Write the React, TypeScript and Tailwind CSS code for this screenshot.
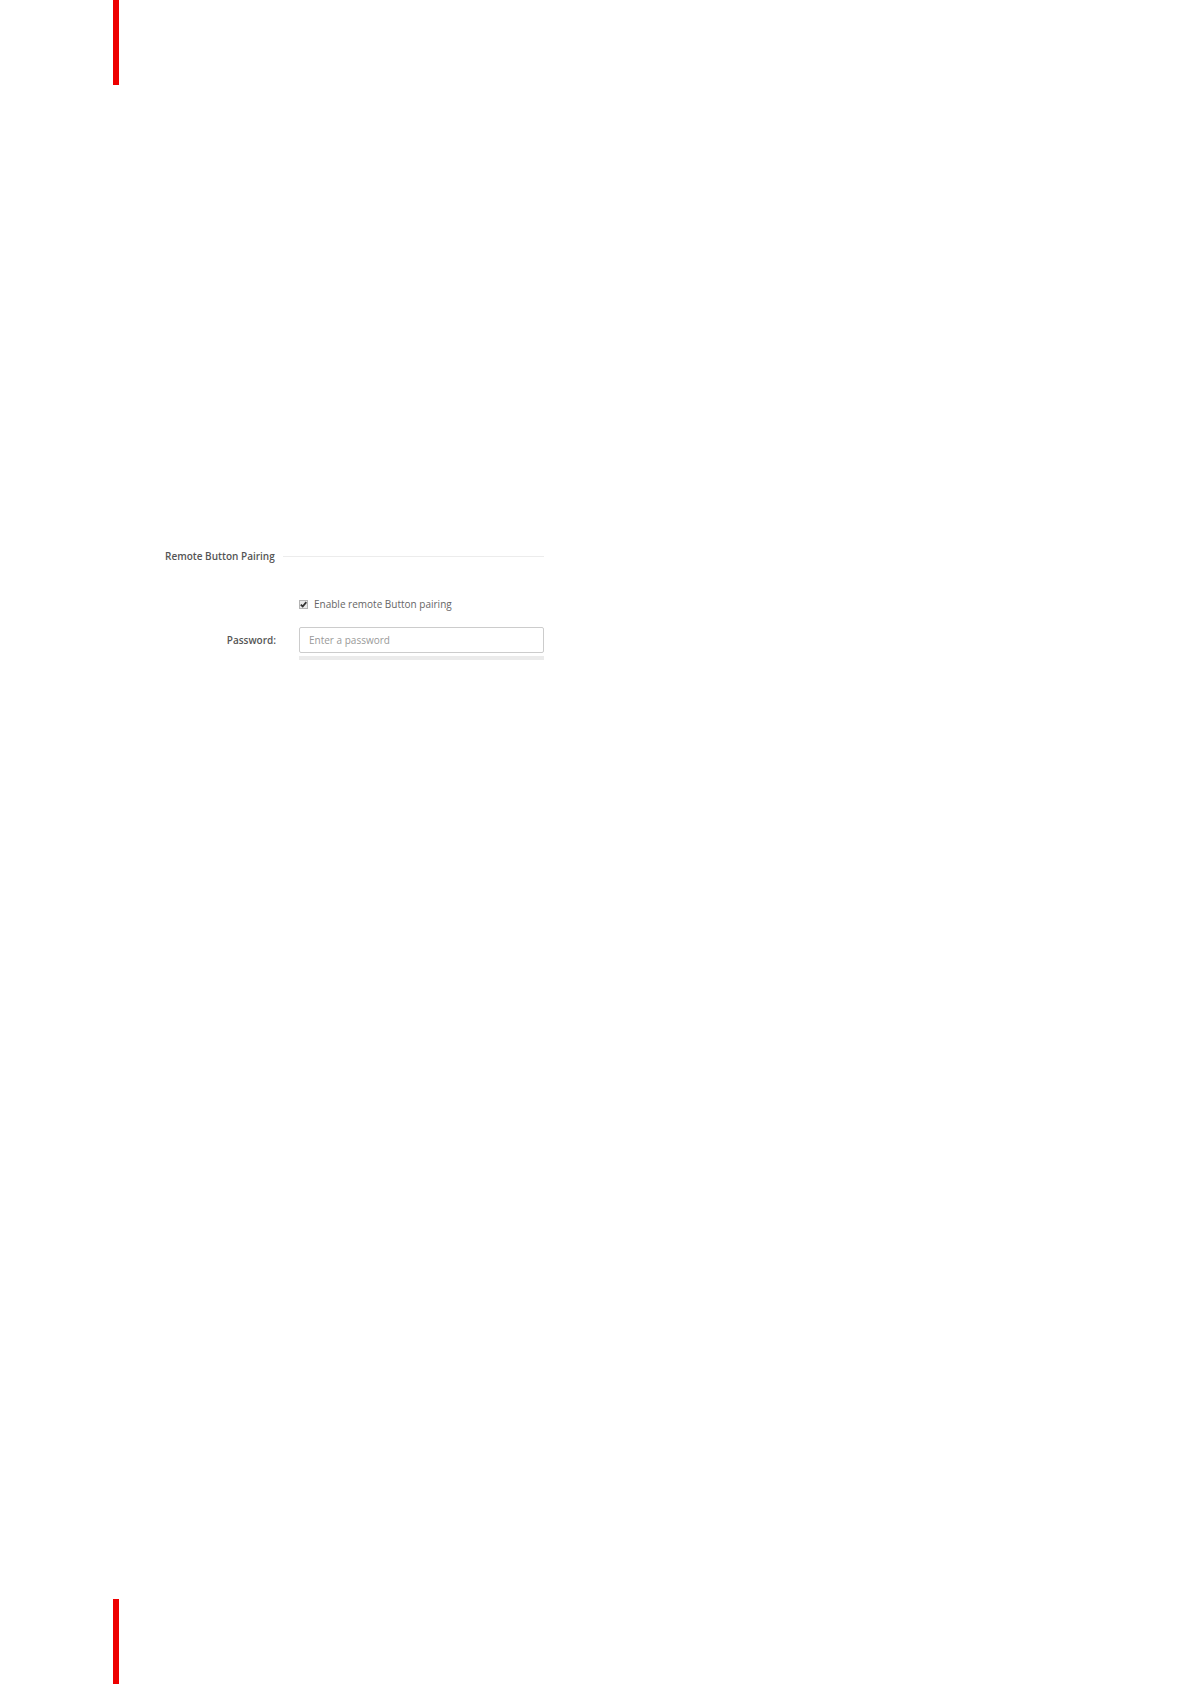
import React, { useState } from 'react';

const MarginBar: React.FC = () => <div className="ml-[113px] h-[85px] w-1.5 bg-[#ee0000]" />;

export default function App() {
  const [enabled, setEnabled] = useState(true);
  const [password, setPassword] = useState('');

  return (
    <div className="flex min-h-screen flex-col bg-white font-['Open_Sans','Liberation_Sans',sans-serif] text-[10px] leading-4 text-[#666]">
      <MarginBar />

      <main className="flex-1 px-[165px] pt-[463px]">
        <section className="w-full max-w-[379px]">
          {/* Section title */}
          <div className="flex items-center gap-2">
            <h2 className="font-semibold text-[#555]">Remote Button Pairing</h2>
            <div className="h-px flex-1 bg-[#ececec]" />
          </div>

          <form className="mt-8 grid grid-cols-[111px_1fr] items-center gap-x-[23px] gap-y-[15px]" onSubmit={e => e.preventDefault()}>
            <div className="col-start-2 flex items-center gap-1.5">
              <span className="relative flex h-[9px] w-[9px]">
                <input
                  id="enable-pairing"
                  type="checkbox"
                  checked={enabled}
                  onChange={e => setEnabled(e.target.checked)}
                  className="h-[9px] w-[9px] appearance-none border border-[#b4b4b4] bg-[#e9e9e9]"
                />
                {enabled && (
                  <svg viewBox="0 0 9 9" className="pointer-events-none absolute inset-0 h-full w-full" fill="none" stroke="#333" strokeWidth="1.8">
                    <path d="M1.8 4.6 L3.7 6.5 L7.3 2.1" />
                  </svg>
                )}
              </span>
              <label htmlFor="enable-pairing">Enable remote Button pairing</label>
            </div>

            <label htmlFor="password" className="text-right font-semibold text-[#555]">Password:</label>
            <input
              id="password"
              type="password"
              value={password}
              onChange={e => setPassword(e.target.value)}
              placeholder="Enter a password"
              className="h-[26px] w-full rounded-xs border border-[#ccc] px-[9px] placeholder:text-[#999] focus:outline-none"
            />
          </form>

          {/* Password strength track */}
          <div className="mt-[3px] ml-[134px] h-1 bg-[#ebebeb]" />
        </section>
      </main>

      <MarginBar />
    </div>
  );
}
